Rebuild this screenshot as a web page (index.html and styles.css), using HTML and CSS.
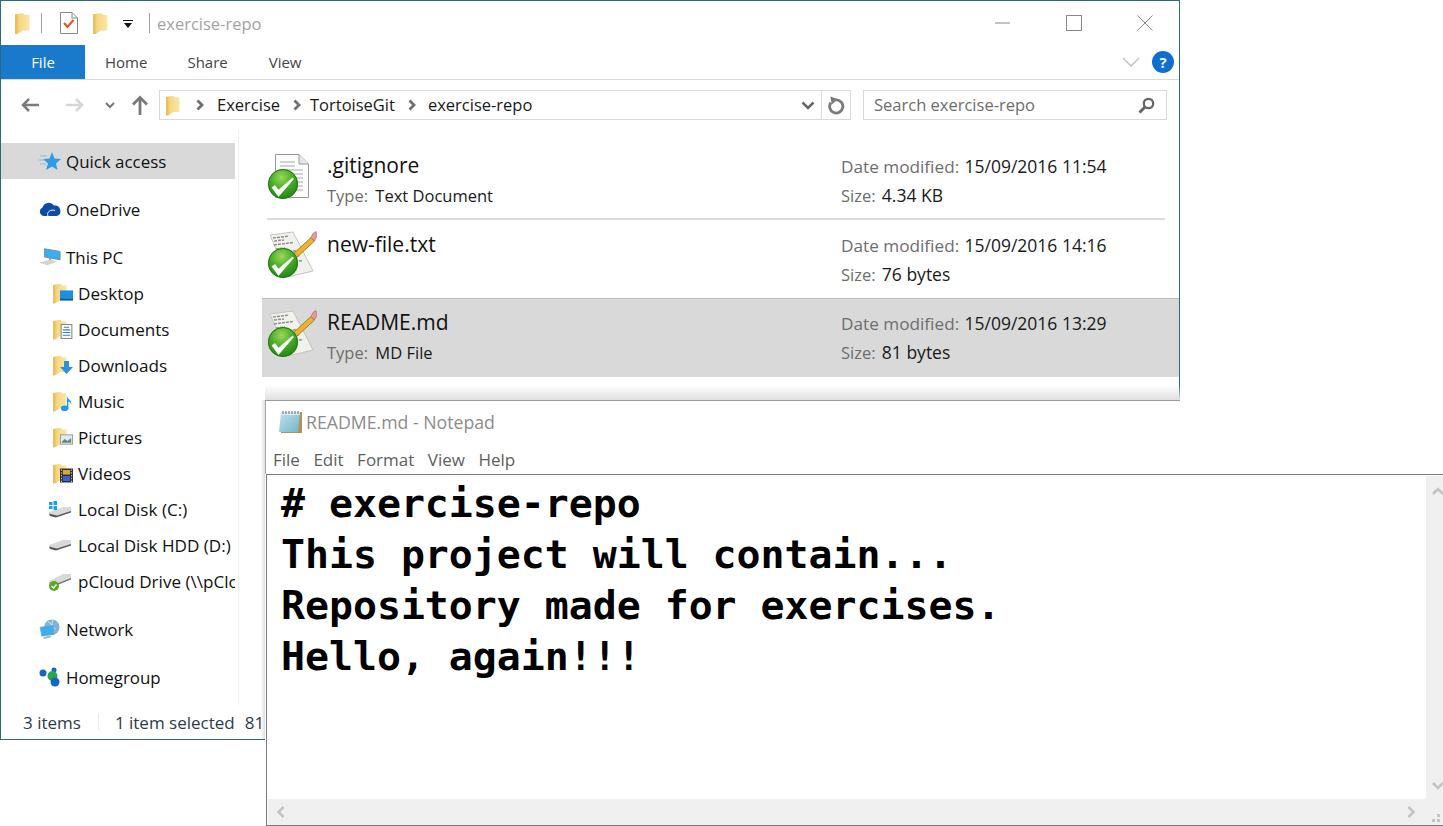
FILE: index.html
```html
<!DOCTYPE html>
<html lang="en">
<head>
<meta charset="utf-8">
<title>exercise-repo</title>
<link rel="stylesheet" href="styles.css">
</head>
<body>
<svg class="defs" width="0" height="0" aria-hidden="true">
  <defs>
    <linearGradient id="fold" x1="0" y1="0" x2="1" y2="0">
      <stop offset="0" stop-color="#eec468"/><stop offset=".35" stop-color="#f7d885"/><stop offset="1" stop-color="#fbe6a6"/>
    </linearGradient>
    <linearGradient id="pad" x1="0" y1="0" x2="1" y2="1">
      <stop offset="0" stop-color="#c4e4ec"/><stop offset="1" stop-color="#6fb4c8"/>
    </linearGradient>
    <radialGradient id="ball" cx=".45" cy=".28" r=".8">
      <stop offset="0" stop-color="#9ad85a"/><stop offset=".5" stop-color="#45a824"/><stop offset="1" stop-color="#1c7d13"/>
    </radialGradient>
    <symbol id="folder" viewBox="0 0 15 21">
      <path d="M0 1.500 7.500 0 10 2H14.500V17.500H8L2.500 21H0Z" fill="url(#fold)"/>
      <path d="M0 1.500 2.500 1.200V21H0Z" fill="#e9bf60"/>
    </symbol>
    <symbol id="badge" viewBox="0 0 30 30">
      <circle cx="15" cy="15" r="15" fill="url(#ball)"/>
      <circle cx="15" cy="15" r="14.500" fill="none" stroke="#1d7a17"/>
      <path d="M4 18.500 7 16.500 10.500 21 24.500 9 25.500 10 10.500 27.500Z" fill="#fff" stroke="#fff" stroke-width=".6" stroke-linejoin="round"/>
    </symbol>
    <symbol id="editdoc" viewBox="0 0 47 47">
      <path d="M0 4 23 1 43 40 18 46Z" fill="#f1f1ee" stroke="#c4c4bf"/>
      <path d="M3 7 19 5M4 10 14 9M4 14 23 11.500M6 18 15 17M7 22 27 19.500M10 27 30 24.500M13 32 33 29.500" stroke="#8f8f8b" stroke-width="1.500" stroke-dasharray="3 1"/>
      <path d="M22 24 41 6.500 44.500 10 25 28Z" fill="#edb32e" stroke="#8d6a18" stroke-width=".8"/>
      <path d="M41 6.500 43 2.500 46 .5 47 5 44.500 10Z" fill="#e89a9a" stroke="#a06060" stroke-width=".6"/>
    </symbol>
  </defs>
</svg>

<section class="explorer">
  <header class="titlebar">
    <svg class="qa-folder"><use href="#folder"/></svg>
    <span class="qa-sep"></span>
    <svg class="qa-props" viewBox="0 0 18 22"><path d="M.5.500H12L17.500 6V21.500H.5Z" fill="#fff" stroke="#8a8a8a"/><path d="M12 .5V6H17.500" fill="none" stroke="#8a8a8a"/><path d="M4 11 7.500 15 13.500 8" fill="none" stroke="#e2531f" stroke-width="2"/></svg>
    <svg class="qa-folder2"><use href="#folder"/></svg>
    <svg class="qa-drop" viewBox="0 0 10 9"><path d="M0 0H10V1H0ZM1 3H9L5 8Z" fill="#111"/></svg>
    <span class="qa-sep qa-sep2"></span>
    <span class="win-title">exercise-repo</span>
    <div class="win-controls">
      <svg class="ctl ctl-min" viewBox="0 0 16 16"><path d="M0 8H15" stroke="#8a8a8a"/></svg>
      <svg class="ctl ctl-max" viewBox="0 0 16 16"><rect x=".5" y=".5" width="15" height="15" fill="none" stroke="#8a8a8a"/></svg>
      <svg class="ctl ctl-close" viewBox="0 0 16 16"><path d="M.5.500 15.500 15.500M15.500.5.500 15.500" stroke="#8a8a8a"/></svg>
    </div>
  </header>

  <nav class="ribbon">
    <span class="tab tab-file">File</span>
    <span class="tab tab-home">Home</span>
    <span class="tab tab-share">Share</span>
    <span class="tab tab-view">View</span>
    <svg class="ribbon-chev" viewBox="0 0 18 10"><path d="M1 1 9 9 17 1" fill="none" stroke="#c4c4c4" stroke-width="1.500"/></svg>
    <span class="help">?</span>
  </nav>

  <div class="addressbar">
    <svg class="nav-arrow arrow-back" viewBox="0 0 20 16"><path d="M19 8H3M9 2 3 8 9 14" fill="none" stroke="#7a7a7a" stroke-width="2.500"/></svg>
    <svg class="nav-arrow arrow-fwd" viewBox="0 0 20 16"><path d="M1 8H17M11 2 17 8 11 14" fill="none" stroke="#d6d6d6" stroke-width="2.500"/></svg>
    <svg class="nav-drop" viewBox="0 0 10 7"><path d="M1 1 5 5 9 1" fill="none" stroke="#777" stroke-width="2"/></svg>
    <svg class="nav-up" viewBox="0 0 18 20"><path d="M9 20V3M2 9.500 9 2.500 16 9.500" fill="none" stroke="#7a7a7a" stroke-width="2.800"/></svg>
    <div class="crumbs">
      <svg class="crumb-folder"><use href="#folder"/></svg>
      <svg class="crumb-sep sep-first" viewBox="0 0 8 12"><path d="M1.500 1.500 6 6 1.500 10.500" fill="none" stroke="#6f6f6f" stroke-width="2.800"/></svg>
      <span class="crumb">Exercise</span>
      <svg class="crumb-sep" viewBox="0 0 8 12"><path d="M1.500 1.500 6 6 1.500 10.500" fill="none" stroke="#6f6f6f" stroke-width="2.800"/></svg>
      <span class="crumb">TortoiseGit</span>
      <svg class="crumb-sep sep-last" viewBox="0 0 8 12"><path d="M1.500 1.500 6 6 1.500 10.500" fill="none" stroke="#6f6f6f" stroke-width="2.800"/></svg>
      <span class="crumb">exercise-repo</span>
      <svg class="crumb-drop" viewBox="0 0 14 9"><path d="M1.500 1.500 7 7 12.500 1.500" fill="none" stroke="#666" stroke-width="2.500"/></svg>
      <span class="crumb-refresh">
        <svg viewBox="0 0 18 20"><path d="M8.500 4A7 7 0 1 1 3 7" fill="none" stroke="#7a7a7a" stroke-width="3"/><path d="M2.500 .5 10.500 3.500 4 9Z" fill="#7a7a7a"/></svg>
      </span>
    </div>
    <div class="search">
      <span class="search-text">Search exercise-repo</span>
      <svg class="search-icon" viewBox="0 0 17 17"><circle cx="10.500" cy="6.500" r="4.700" fill="none" stroke="#666" stroke-width="2.300"/><path d="M7 10 1.500 15.500" stroke="#666" stroke-width="3"/></svg>
    </div>
  </div>

  <div class="body">
    <aside class="sidebar">
      <div class="nav-item nav-top nav-active">
        <svg class="nav-ico" viewBox="0 0 22 20"><path d="M13 1 15.500 7.500 22 8 17 12.500 18.500 19 13 15.500 7 19 9 12.500 4 8 10.500 7.500Z" fill="#2f9be8"/><path d="M1 5H8M0 9H6M1 13H7" stroke="#7cc0ef"/></svg>
        <span>Quick access</span>
      </div>
      <div class="nav-item nav-top nav-gap">
        <svg class="nav-ico nav-ico-cloud" viewBox="0 0 22 14"><path d="M4.500 14A4.500 4.500 0 0 1 3.500 5.500 6.500 6.500 0 0 1 15 3.500 5.500 5.500 0 0 1 18 14Z" fill="#0f4ba5"/><path d="M9 14C7 10 12 7 16 8.500" fill="none" stroke="#fff"/></svg>
        <span>OneDrive</span>
      </div>
      <div class="nav-item nav-top nav-gap">
        <svg class="nav-ico" viewBox="0 0 24 20"><path d="M6 1 23 4V13L6 10Z" fill="#39aef0" stroke="#6e8aa0"/><path d="M12 11V14" stroke="#999" stroke-width="2"/><path d="M0 16 12 13 20 15 9 19Z" fill="#d2d2d2"/></svg>
        <span>This PC</span>
      </div>
      <div class="nav-item nav-sub">
        <span class="folder-ico"><svg class="sub-folder"><use href="#folder"/></svg><svg class="sub-over" viewBox="0 0 14 11"><rect width="14" height="10" fill="#1d8fe0"/><rect y="9" width="14" height="2" fill="#0f5c96"/></svg></span>
        <span>Desktop</span>
      </div>
      <div class="nav-item nav-sub">
        <span class="folder-ico"><svg class="sub-folder"><use href="#folder"/></svg><svg class="sub-over" viewBox="0 0 11 14"><rect x=".5" y=".5" width="10" height="13" fill="#fff" stroke="#888"/><path d="M3 3H8M2 5.500H9M2 8H9M2 10.500H9" stroke="#3b7fb6"/></svg></span>
        <span>Documents</span>
      </div>
      <div class="nav-item nav-sub">
        <span class="folder-ico"><svg class="sub-folder"><use href="#folder"/></svg><svg class="sub-over" viewBox="0 0 13 13"><path d="M4 0H9V6H13L6.500 13 0 6H4Z" fill="#2f8fdf"/></svg></span>
        <span>Downloads</span>
      </div>
      <div class="nav-item nav-sub">
        <span class="folder-ico"><svg class="sub-folder"><use href="#folder"/></svg><svg class="sub-over" viewBox="0 0 12 16"><ellipse cx="4" cy="13" rx="4" ry="3" fill="#1d9be8"/><path d="M6.500 13V0C7 4 12 4 11 9 10 6 9 6 8 6V13Z" fill="#1d9be8"/></svg></span>
        <span>Music</span>
      </div>
      <div class="nav-item nav-sub">
        <span class="folder-ico"><svg class="sub-folder"><use href="#folder"/></svg><svg class="sub-over" viewBox="0 0 14 11"><rect x=".5" y=".5" width="13" height="10" fill="#dfeaf3" stroke="#999"/><path d="M2 8 5 5 8 7 12 4V9H2Z" fill="#5d8d7c"/></svg></span>
        <span>Pictures</span>
      </div>
      <div class="nav-item nav-sub">
        <span class="folder-ico"><svg class="sub-folder"><use href="#folder"/></svg><svg class="sub-over" viewBox="0 0 14 15"><rect width="14" height="15" fill="#2a2a2a"/><rect x="3" y="1.500" width="8" height="5" fill="#d8a83a"/><rect x="3" y="8" width="8" height="5.500" fill="#3a62c8"/><path d="M1.500 1V15M12.500 1V15" stroke="#ddd" stroke-dasharray="1.500 1.500"/></svg></span>
        <span>Videos</span>
      </div>
      <div class="nav-item nav-sub">
        <svg class="drive-ico" viewBox="0 0 23 17"><path d="M0 11 14 6H22V11L7 16 1 15Z" fill="#d9d9d9"/><path d="M0 12.500 8 14.500 22 10V11.500L7 16.500 1 15Z" fill="#5a5a5a"/><path d="M0 1H3.500V4H0ZM4.500 0H8V4H4.500ZM0 5H3.500V8H0ZM4.500 5H8V9H4.500Z" fill="#15a4ea"/></svg>
        <span>Local Disk (C:)</span>
      </div>
      <div class="nav-item nav-sub">
        <svg class="drive-ico" viewBox="0 0 23 17"><path d="M0 8 14 3H22V8L7 13 1 12Z" fill="#d9d9d9"/><path d="M0 9.500 8 11.500 22 7V8.500L7 13.500 1 12Z" fill="#5a5a5a"/></svg>
        <span>Local Disk HDD (D:)</span>
      </div>
      <div class="nav-item nav-sub">
        <span class="pcloud-ico"><svg class="drive-ico" viewBox="0 0 23 17"><path d="M0 8 14 1H22V6L7 12 1 11Z" fill="#d9d9d9"/><path d="M0 9.500 8 10.500 22 5V6.500L7 12.500 1 11Z" fill="#777"/></svg><svg class="pcloud-badge" viewBox="0 0 10 10"><circle cx="5" cy="5" r="5" fill="#55a821"/><path d="M2.500 5 4.500 7 7.500 3.500" fill="none" stroke="#fff" stroke-width="1.400"/></svg></span>
        <span class="nav-clip">pCloud Drive (\\pCloud)</span>
      </div>
      <div class="nav-item nav-top nav-gap">
        <svg class="nav-ico" viewBox="0 0 22 22"><circle cx="13" cy="9" r="8.500" fill="#7fb3d6"/><path d="M9 3C13 5 13 9 17 11M14 1C12 6 16 11 11 17" fill="none" stroke="#e4eef5"/><path d="M0 9 15 7V17L2 19Z" fill="#39aef0" stroke="#7c9db3" stroke-width=".6"/><path d="M4 21 12 19" stroke="#b0b0b0" stroke-width="2"/></svg>
        <span>Network</span>
      </div>
      <div class="nav-item nav-top nav-gap">
        <svg class="nav-ico" viewBox="0 0 22 20"><circle cx="4" cy="6" r="3.500" fill="#1566c0"/><circle cx="15" cy="3" r="2.500" fill="#1566c0"/><circle cx="13.500" cy="9" r="5" fill="#28a84a"/><circle cx="16" cy="15" r="4.500" fill="#1566c0"/></svg>
        <span>Homegroup</span>
      </div>
    </aside>

    <main class="files">
      <article class="file file-first">
        <span class="file-ico">
          <svg class="doc-ico" viewBox="0 0 34 44"><path d="M.5.5H24L33.500 10V43.500H.5Z" fill="#fdfdfd" stroke="#999"/><path d="M24 .5V10H33.500" fill="#e6e6e6" stroke="#999"/><path d="M5 8H20M5 12H20M5 16H28M5 20H28M5 24H28M5 28H28M5 32H28M5 36H28" stroke="#a8a8a8"/></svg>
          <svg class="badge"><use href="#badge"/></svg>
        </span>
        <div class="file-main">
          <div class="file-name">.gitignore</div>
          <div class="file-meta"><span class="lbl">Type:</span> Text Document</div>
        </div>
        <div class="file-side">
          <div class="side-line"><span class="lbl lbl-date">Date modified:</span> <span class="val">15/09/2016 11:54</span></div>
          <div class="side-line side-size"><span class="lbl">Size:</span> <span class="val">4.34 KB</span></div>
        </div>
      </article>
      <article class="file file-second">
        <span class="file-ico">
          <svg class="edit-ico"><use href="#editdoc"/></svg>
          <svg class="badge"><use href="#badge"/></svg>
        </span>
        <div class="file-main">
          <div class="file-name">new-file.txt</div>
          <div class="file-meta">&nbsp;</div>
        </div>
        <div class="file-side">
          <div class="side-line"><span class="lbl lbl-date">Date modified:</span> <span class="val">15/09/2016 14:16</span></div>
          <div class="side-line side-size"><span class="lbl">Size:</span> <span class="val">76 bytes</span></div>
        </div>
      </article>
      <article class="file file-selected">
        <span class="file-ico">
          <svg class="edit-ico"><use href="#editdoc"/></svg>
          <svg class="badge"><use href="#badge"/></svg>
        </span>
        <div class="file-main">
          <div class="file-name">README.md</div>
          <div class="file-meta"><span class="lbl">Type:</span> MD File</div>
        </div>
        <div class="file-side">
          <div class="side-line"><span class="lbl lbl-date">Date modified:</span> <span class="val">15/09/2016 13:29</span></div>
          <div class="side-line side-size"><span class="lbl">Size:</span> <span class="val">81 bytes</span></div>
        </div>
      </article>
    </main>
  </div>

  <footer class="status">
    <span class="st-count">3 items</span>
    <span class="st-sep"></span>
    <span class="st-sel">1 item selected</span>
    <span class="st-size">81 bytes</span>
  </footer>
</section>

<section class="notepad">
  <header class="np-title">
    <svg class="np-ico" viewBox="0 0 24 24"><rect x="3" y="2" width="21" height="21" fill="#b58f5c"/><path d="M3 2H22L20 22H1Z" fill="url(#pad)"/><path d="M3 2H22L21.500 5H2.500Z" fill="#d8eef4"/><path d="M5 1V4M8 1V4M11 1V4M14 1V4M17 1V4M20 1V4" stroke="#666"/></svg>
    <span class="np-name">README.md - Notepad</span>
  </header>
  <div class="np-menu">
    <span class="np-mi">File</span><span class="np-mi">Edit</span><span class="np-mi">Format</span><span class="np-mi">View</span><span class="np-mi">Help</span>
  </div>
  <div class="np-edit">
    <pre class="np-text"># exercise-repo
This project will contain...
Repository made for exercises.
Hello, again!!!</pre>
    <div class="np-vscroll">
      <svg class="sc-arrow" viewBox="0 0 12 8"><path d="M1 7 6 2 11 7" fill="none" stroke="#c4c4c4" stroke-width="2.600"/></svg>
      <svg class="sc-arrow" viewBox="0 0 12 8"><path d="M1 1 6 6 11 1" fill="none" stroke="#c4c4c4" stroke-width="2.600"/></svg>
    </div>
  </div>
  <div class="np-hscroll">
    <svg class="sc-arrow-h" viewBox="0 0 8 12"><path d="M7 1 2 6 7 11" fill="none" stroke="#c4c4c4" stroke-width="2.600"/></svg>
    <svg class="sc-arrow-h" viewBox="0 0 8 12"><path d="M1 1 6 6 1 11" fill="none" stroke="#c4c4c4" stroke-width="2.600"/></svg>
    <svg class="grip" viewBox="0 0 17 17"><path d="M11 11H14V14H11ZM6 11H9V14H6ZM11 6H14V9H11Z" fill="#c4c4c4"/></svg>
  </div>
</section>
</body>
</html>
```

FILE: styles.css
```css
* { box-sizing: border-box; }
html, body { margin: 0; padding: 0; height: 100%; overflow: hidden; background: #fff; }
body { position: relative; width: 1443px; height: 826px; font-family: "Open Sans", "Noto Sans", sans-serif; font-size: 16.5px; color: #1a1a1a; }
svg { display: block; flex: none; }
.defs { position: absolute; }

/* Explorer window */
.explorer { position: absolute; left: 0; top: 0; width: 1180px; height: 740px; border: 1px solid #2b6b77; background: #fff; display: flex; flex-direction: column; }

.titlebar { height: 44px; display: flex; align-items: center; padding-left: 14px; flex: none; }
.qa-folder { width: 15px; height: 21px; }
.qa-sep { width: 1px; height: 20px; background: #a0a0a0; margin-left: 11px; }
.qa-props { width: 18px; height: 22px; margin-left: 18px; }
.qa-folder2 { width: 15px; height: 21px; margin-left: 15px; }
.qa-drop { width: 10px; height: 9px; margin-left: 15px; margin-top: 3px; }
.qa-sep2 { margin-left: 16px; }
.win-title { margin-left: 7px; color: #a3a3a3; font-size: 16.5px; }
.win-controls { margin-left: auto; display: flex; align-items: center; padding-right: 26px; }
.ctl { width: 16px; height: 16px; }
.ctl-min { margin-right: 55px; }
.ctl-close { margin-left: 55px; }

.ribbon { height: 35px; flex: none; display: flex; align-items: center; border-bottom: 1px solid #dadada; }
.tab { font-size: 15px; color: #444; }
.tab-file { width: 84px; height: 34px; background: #1979ca; color: #fff; display: flex; align-items: center; justify-content: center; }
.tab-home { margin-left: 20px; }
.tab-share { margin-left: 40px; }
.tab-view { margin-left: 41px; }
.ribbon-chev { width: 18px; height: 10px; margin-left: auto; margin-right: 12px; }
.help { width: 22px; height: 22px; border-radius: 50%; background: #0f6fd1; color: #fff; font-size: 15px; font-weight: 700; display: flex; align-items: center; justify-content: center; margin-right: 5px; }

.addressbar { height: 50px; flex: none; display: flex; align-items: center; }
.nav-arrow { width: 20px; height: 16px; }
.arrow-back { margin-left: 19px; }
.arrow-fwd { margin-left: 25px; }
.nav-drop { width: 10px; height: 7px; margin-left: 20px; }
.nav-up { width: 18px; height: 20px; margin-left: 16px; }
.crumbs { width: 692px; height: 30px; margin-left: 10px; border: 1px solid #d9d9d9; display: flex; align-items: center; padding-left: 6px; }
.crumb-folder { width: 14px; height: 21px; }
.crumb-sep { width: 8px; height: 12px; margin: 0 9px 0 13px; }
.sep-first { margin-left: 16px; margin-right: 13px; }
.sep-last { margin-right: 12px; }
.crumb { font-size: 16.5px; color: #1a1a1a; padding-bottom: 2px; }
.crumb-drop { width: 14px; height: 9px; margin-left: auto; margin-right: 6px; }
.crumb-refresh { width: 29px; height: 28px; border-left: 1px solid #d9d9d9; display: flex; align-items: center; justify-content: center; }
.crumb-refresh svg { width: 17px; height: 19px; }
.search { width: 304px; height: 30px; margin-left: 12px; border: 1px solid #d9d9d9; display: flex; align-items: center; padding: 0 11px 0 10px; justify-content: space-between; }
.search-text { color: #6d6d6d; font-size: 16.5px; padding-bottom: 2px; }
.search-icon { width: 17px; height: 17px; }

.body { height: 575px; flex: none; display: flex; }
.sidebar { width: 238px; height: 575px; padding: 13px 3px 0 0; border-right: 1px solid #f0f0f0; flex: none; overflow: hidden; }
.nav-item { height: 36px; display: flex; align-items: center; color: #111; font-size: 16.9px; white-space: nowrap; overflow: hidden; }
.nav-top { padding-left: 38px; }
.nav-sub { padding-left: 48px; font-size: 17.1px; }
.nav-gap { margin-top: 12px; }
.nav-active { background: #d9d9d9; }
.nav-ico { width: 22px; height: 20px; margin-right: 5px; }
.nav-ico-cloud { height: 14px; }
.folder-ico { position: relative; width: 25px; height: 21px; flex: none; margin-left: 4px; }
.sub-folder { width: 14px; height: 21px; }
.sub-over { position: absolute; right: 5px; bottom: 1px; width: 13px; height: 15px; }
.drive-ico { width: 23px; height: 17px; margin-right: 6px; }
.pcloud-ico { position: relative; flex: none; }
.pcloud-badge { position: absolute; left: 0; bottom: -1px; width: 10px; height: 10px; }

.files { flex: 1; padding: 11px 0 0 23px; }
.file { height: 79px; display: flex; padding: 0 14px 0 5px; position: relative; }
.file-first::after { content: ""; position: absolute; left: 5px; right: 14px; bottom: 0; height: 2px; background: #dcdcdc; }
.file-second { height: 78px; }
.file-selected { background: #d9d9d9; box-shadow: inset 0 1px #bdbdbd; }
.file-selected .file-ico { margin-top: 1px; }
.file-ico { position: relative; width: 60px; flex: none; }
.doc-ico { position: absolute; left: 8px; top: 13px; width: 34px; height: 44px; }
.edit-ico { position: absolute; left: 3px; top: 11px; width: 47px; height: 47px; }
.badge { position: absolute; left: 1px; top: 28px; width: 30px; height: 30px; }
.file-main { width: 513px; }
.file-name { font-size: 21px; line-height: 28px; margin-top: 10px; color: #111; }
.file-meta { font-size: 16.5px; line-height: 24px; margin-top: 5px; color: #1a1a1a; }
.file-meta .lbl { margin-right: 3px; }
.file-side { flex: 1; font-size: 16.5px; padding: 13px 0 0 1px; white-space: nowrap; }
.side-line { line-height: 24px; color: #1a1a1a; }
.side-line .lbl { margin-right: 2px; }
.side-line .lbl-date { margin-right: 1px; }
.side-size { margin-top: 4px; }
.lbl { color: #6d6d6d; }
.lbl-date { font-size: 17.2px; }
.val { font-size: 17.5px; }

.status { flex: 1; display: flex; align-items: center; color: #2e3b4a; font-size: 17px; padding-left: 22px; }
.st-sep { width: 1px; height: 16px; background: #ededed; margin: 0 16px 0 17px; }
.st-size { margin-left: 10px; white-space: nowrap; }

/* Notepad window */
.notepad { position: absolute; left: 265px; top: 399px; width: 1178px; height: 427px; background: #fff; display: flex; flex-direction: column; }
.notepad::before { content: ""; position: absolute; left: 0; top: -14px; width: 915px; height: 15px; background: linear-gradient(to bottom, rgba(220,220,220,0), #e0e0e0); border-bottom: 1px solid #9a9a9a; }
.notepad::after { content: ""; position: absolute; left: -4px; top: 1px; width: 4px; height: 339px; background: linear-gradient(to right, rgba(220,220,220,0), #dcdcdc); }
.np-title { height: 48px; flex: none; display: flex; align-items: center; padding: 0 0 3px 12px; border-left: 1px solid #aaa; }
.np-ico { width: 24px; height: 24px; }
.np-name { margin-left: 4px; color: #8c8c8c; font-size: 17.7px; }
.np-menu { height: 27px; flex: none; display: flex; padding: 0 0 2px 7px; align-items: center; gap: 13.5px; border-left: 1px solid #aaa; }
.np-mi { color: #5e5e5e; font-size: 17px; }
.np-edit { flex: 1; min-height: 0; display: flex; margin-left: 1px; border-top: 1px solid #7c7c7c; border-left: 1px solid #7c7c7c; }
.np-text { flex: 1; margin: 0; padding: 3px 0 0 14px; font-family: "DejaVu Sans Mono", monospace; font-weight: 700; font-size: 39.85px; line-height: 51px; color: #000; }
.np-vscroll { width: 17px; flex: none; margin-top: 1px; background: #f0f0f0; display: flex; flex-direction: column; justify-content: space-between; padding: 11px 0 9px 6px; overflow: hidden; }
.sc-arrow { width: 12px; height: 8px; }
.np-hscroll { height: 27px; flex: none; margin-left: 1px; background: #f0f0f0; border-bottom: 1px solid #7c7c7c; border-left: 1px solid #7c7c7c; box-shadow: inset 1px 0 #fff; display: flex; align-items: center; padding-left: 9px; gap: 1122px; position: relative; }
.sc-arrow-h { width: 9px; height: 12px; }
.grip { position: absolute; right: 0; bottom: 0; width: 17px; height: 17px; }
```
